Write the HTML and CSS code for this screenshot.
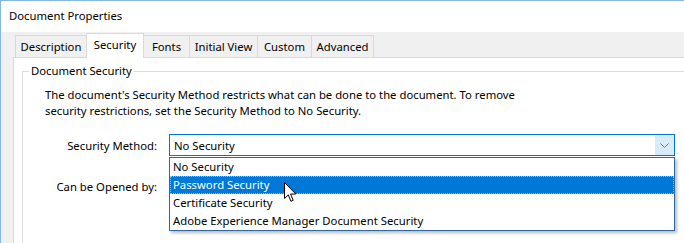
FILE: index.html
```html
<!DOCTYPE html>
<html>
	<head>
		<link rel="stylesheet" href="styles.css">
	</head>

	<body>
		<div class="window">
			<div class="titlebar">Document Properties</div>

			<div class="main">
				<div class="tabs">
					<div class="tab tab-desc">Description</div>
					<div class="tab tab-sec active">Security</div>
					<div class="tab tab-fonts">Fonts</div>
					<div class="tab tab-view">Initial View</div>
					<div class="tab tab-custom">Custom</div>
					<div class="tab tab-adv">Advanced</div>
				</div>

				<div class="panel">
					<fieldset class="group">
						<legend>Document Security</legend>
						<p class="note">The document's Security Method restricts what can be done to the document. To remove<br>security restrictions, set the Security Method to No Security.</p>

						<div class="field">
							<label>Security Method:</label>
							<div class="combo">
								<span class="combo-value">No Security</span>
								<span class="combo-btn">
									<svg width="9" height="5" viewBox="0 0 9 5"><path d="M0.5 0.5 L4.5 4.5 L8.5 0.5" fill="none" stroke="#6a7a8a" stroke-width="1"/></svg>
								</span>
								<ul class="combo-list">
									<li>No Security</li>
									<li class="hover">Password Security</li>
									<li>Certificate Security</li>
									<li>Adobe Experience Manager Document Security</li>
								</ul>
							</div>
						</div>

						<div class="field second">
							<label>Can be Opened by:</label>
						</div>
					</fieldset>
				</div>
			</div>

			<!-- mouse pointer over the list -->
			<svg class="pointer" width="13" height="21" viewBox="0 0 13 21">
				<path d="M0.5 0.5 L0.5 16.5 L4.3 12.9 L6.9 19.3 L9.2 18.3 L6.6 12 L11.8 12 Z" fill="#fff" stroke="#000" stroke-width="1" stroke-linejoin="miter"/>
			</svg>
		</div>
	</body>
</html>
```

FILE: styles.css
```css
html, body {
	margin: 0;
	height: 100%;
	overflow: hidden;
}

body {
	font-family: "Noto Sans", "Open Sans", sans-serif;
	font-size: 11.3px;
	color: #000;
	background-color: #fff;
}

.window {
	position: relative;
	height: 100%;
	box-sizing: border-box;
	border-top: 1px solid #86b6e6;
	border-left: 1px solid #86b6e6;
	display: flex;
	flex-direction: column;
}

.titlebar {
	height: 31px;
	line-height: 30px;
	padding-left: 8px;
	background-color: #fff;
}

.main {
	flex: 1;
	display: flex;
	flex-direction: column;
	background-color: #f0f0f0;
	padding-left: 12px;
}

.tabs {
	display: flex;
	align-items: flex-end;
	height: 25px;
	padding-left: 2px;
}

.tab {
	height: 22px;
	line-height: 21px;
	box-sizing: border-box;
	text-align: center;
	white-space: nowrap;
	border: 1px solid #d9d9d9;
	border-bottom: none;
	margin-left: -1px;
	background-color: #f0f0f0;
}

.tab:first-child {
	margin-left: 0;
}

.tab-desc { width: 72px; }
.tab-sec { width: 58px; }
.tab-fonts { width: 47px; }
.tab-view { width: 69px; }
.tab-custom { width: 55px; }
.tab-adv { width: 63px; }

.tab.active {
	position: relative;
	z-index: 1;
	height: 25px;
	line-height: 22px;
	margin-bottom: -1px;
	background-color: #fff;
}

.panel {
	flex: 1;
	display: flex;
	flex-direction: column;
	background-color: #fff;
	border-top: 1px solid #d9d9d9;
	border-left: 1px solid #d9d9d9;
	padding: 5px 0 0 8px;
}

.group {
	flex: 1;
	min-width: 0;
	margin: 0;
	border: 1px solid #dcdcdc;
	border-right: none;
	border-bottom: none;
	padding: 8px 9px 0 22px;
}

.group legend {
	line-height: 16px;
	padding: 0 2px;
	margin-left: -16px;
}

.note {
	margin: 0 0 15px;
	line-height: 16px;
}

.field {
	display: grid;
	grid-template-columns: 112px 1fr;
	column-gap: 12px;
	align-items: center;
	height: 22px;
}

.field label {
	text-align: right;
}

.field.second {
	margin-top: 19px;
}

.combo {
	position: relative;
	height: 22px;
	box-sizing: border-box;
	border: 1px solid #0078d7;
	display: flex;
	align-items: center;
}

.combo-value {
	flex: 1;
	padding-left: 4px;
}

.combo-btn {
	width: 19px;
	height: 100%;
	background-color: #d9eaf8;
	display: flex;
	align-items: center;
	justify-content: center;
}

.combo-list {
	position: absolute;
	z-index: 2;
	top: 22px;
	left: -1px;
	right: -1px;
	margin: 0;
	padding: 0;
	list-style: none;
	background-color: #fff;
	border: 1px solid #2f6aa3;
	box-shadow: 2px 2px 3px rgba(0, 0, 0, 0.28);
}

.combo-list li {
	height: 18px;
	line-height: 18px;
	padding-left: 3px;
	box-sizing: border-box;
}

.combo-list li.hover {
	background-color: #0078d7;
	color: #fff;
	outline: 1px dotted #8cc0ee;
	outline-offset: -1px;
}

.pointer {
	position: absolute;
	left: 283px;
	top: 181px;
	z-index: 3;
}
```
